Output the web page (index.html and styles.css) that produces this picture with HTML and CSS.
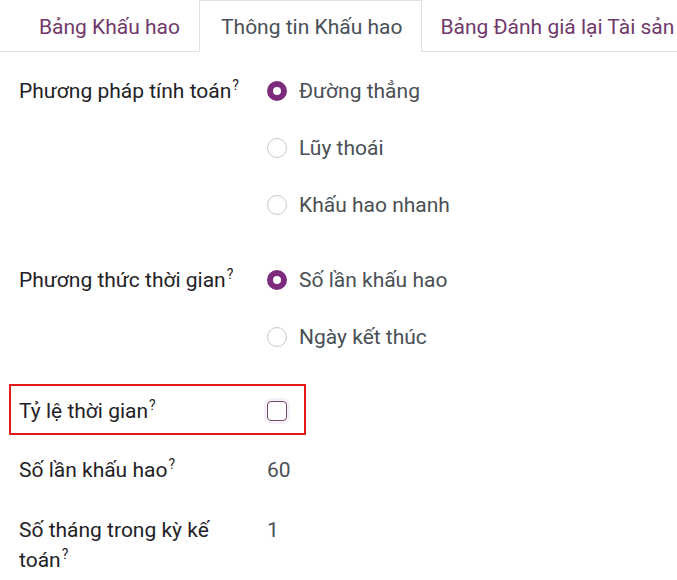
FILE: index.html
```html
<!DOCTYPE html>
<html lang="vi">
<head>
<meta charset="utf-8">
<link rel="stylesheet" href="styles.css">
</head>
<body>
<nav class="tabs">
  <a class="tab">Bảng Khấu hao</a>
  <a class="tab active">Thông tin Khấu hao</a>
  <a class="tab">Bảng Đánh giá lại Tài sản</a>
</nav>
<main class="form">
  <div class="row radio-row first">
    <div class="label">Phương pháp tính toán<sup>?</sup></div>
    <div class="radios">
      <label class="radio"><span class="dot checked"></span>Đường thẳng</label>
      <label class="radio"><span class="dot"></span>Lũy thoái</label>
      <label class="radio"><span class="dot"></span>Khấu hao nhanh</label>
    </div>
  </div>
  <div class="row radio-row">
    <div class="label">Phương thức thời gian<sup>?</sup></div>
    <div class="radios">
      <label class="radio"><span class="dot checked"></span>Số lần khấu hao</label>
      <label class="radio"><span class="dot"></span>Ngày kết thúc</label>
    </div>
  </div>
  <div class="row highlighted">
    <div class="label">Tỷ lệ thời gian<sup>?</sup></div>
    <div class="value"><span class="checkbox"></span></div>
    <span class="mark"></span>
  </div>
  <div class="row">
    <div class="label">Số lần khấu hao<sup>?</sup></div>
    <div class="value">60</div>
  </div>
  <div class="row last">
    <div class="label">Số tháng trong kỳ kế toán<sup>?</sup></div>
    <div class="value">1</div>
  </div>
</main>
</body>
</html>
```
FILE: styles.css
```css
* { box-sizing: border-box; }
html, body { margin: 0; padding: 0; background: #fff; }
body {
  font-family: Roboto, "Noto Sans", sans-serif;
  font-size: 21px;
  color: #212529;
  overflow: hidden;
  width: 677px;
}
.tabs {
  display: flex;
  flex-wrap: nowrap;
  padding-left: 19px;
  border-bottom: 1px solid #dee2e6;
  white-space: nowrap;
  height: 52px;
}
.tab {
  display: block;
  flex: none;
  padding: 11px 18px 0 19px;
  height: 52px;
  line-height: 30px;
  color: #71396b;
  border: 1px solid transparent;
  border-bottom: none;
}
.tab.active {
  color: #495057;
  background: #fff;
  border-color: #dee2e6;
  height: 52px;
  margin-bottom: -1px;
  padding-left: 21px;
  padding-right: 19px;
}
.tab.active + .tab { padding-left: 17px; }
.form {
  padding: 24px 0 0 19px;
  display: flex;
  flex-direction: column;
  gap: 29px;
}
.row {
  display: grid;
  grid-template-columns: 248px 1fr;
  line-height: 30px;
  position: relative;
}
.row.first { margin-bottom: 1px; }
.row.last { margin-top: 1px; }
.radio-row { padding-bottom: 15px; }
.label { color: #1f2226; padding-right: 18px; }
.label sup {
  font-size: 14px;
  line-height: 0;
  vertical-align: baseline;
  position: relative;
  top: -8px;
  margin-left: 1px;
}
.radios { display: flex; flex-direction: column; gap: 27px; }
.radio {
  display: flex;
  align-items: center;
  gap: 12px;
  color: #4a4f55;
  height: 30px;
}
.dot {
  width: 20px;
  height: 20px;
  border-radius: 50%;
  border: 1px solid #c9c9c9;
  flex: none;
}
.dot.checked { border: 6px solid #7c2a7c; }
.value { color: #4a4f55; display: flex; align-items: center; height: 30px; }
.checkbox {
  width: 20px;
  height: 20px;
  border: 1px solid #714b67;
  border-radius: 4px;
  box-shadow: 0 0 0 3px #f5f0fa;
  display: block;
}
.mark {
  position: absolute;
  left: -10px;
  top: -12px;
  width: 297px;
  height: 51px;
  border: 2px solid #e01b1b;
  pointer-events: none;
}
```
